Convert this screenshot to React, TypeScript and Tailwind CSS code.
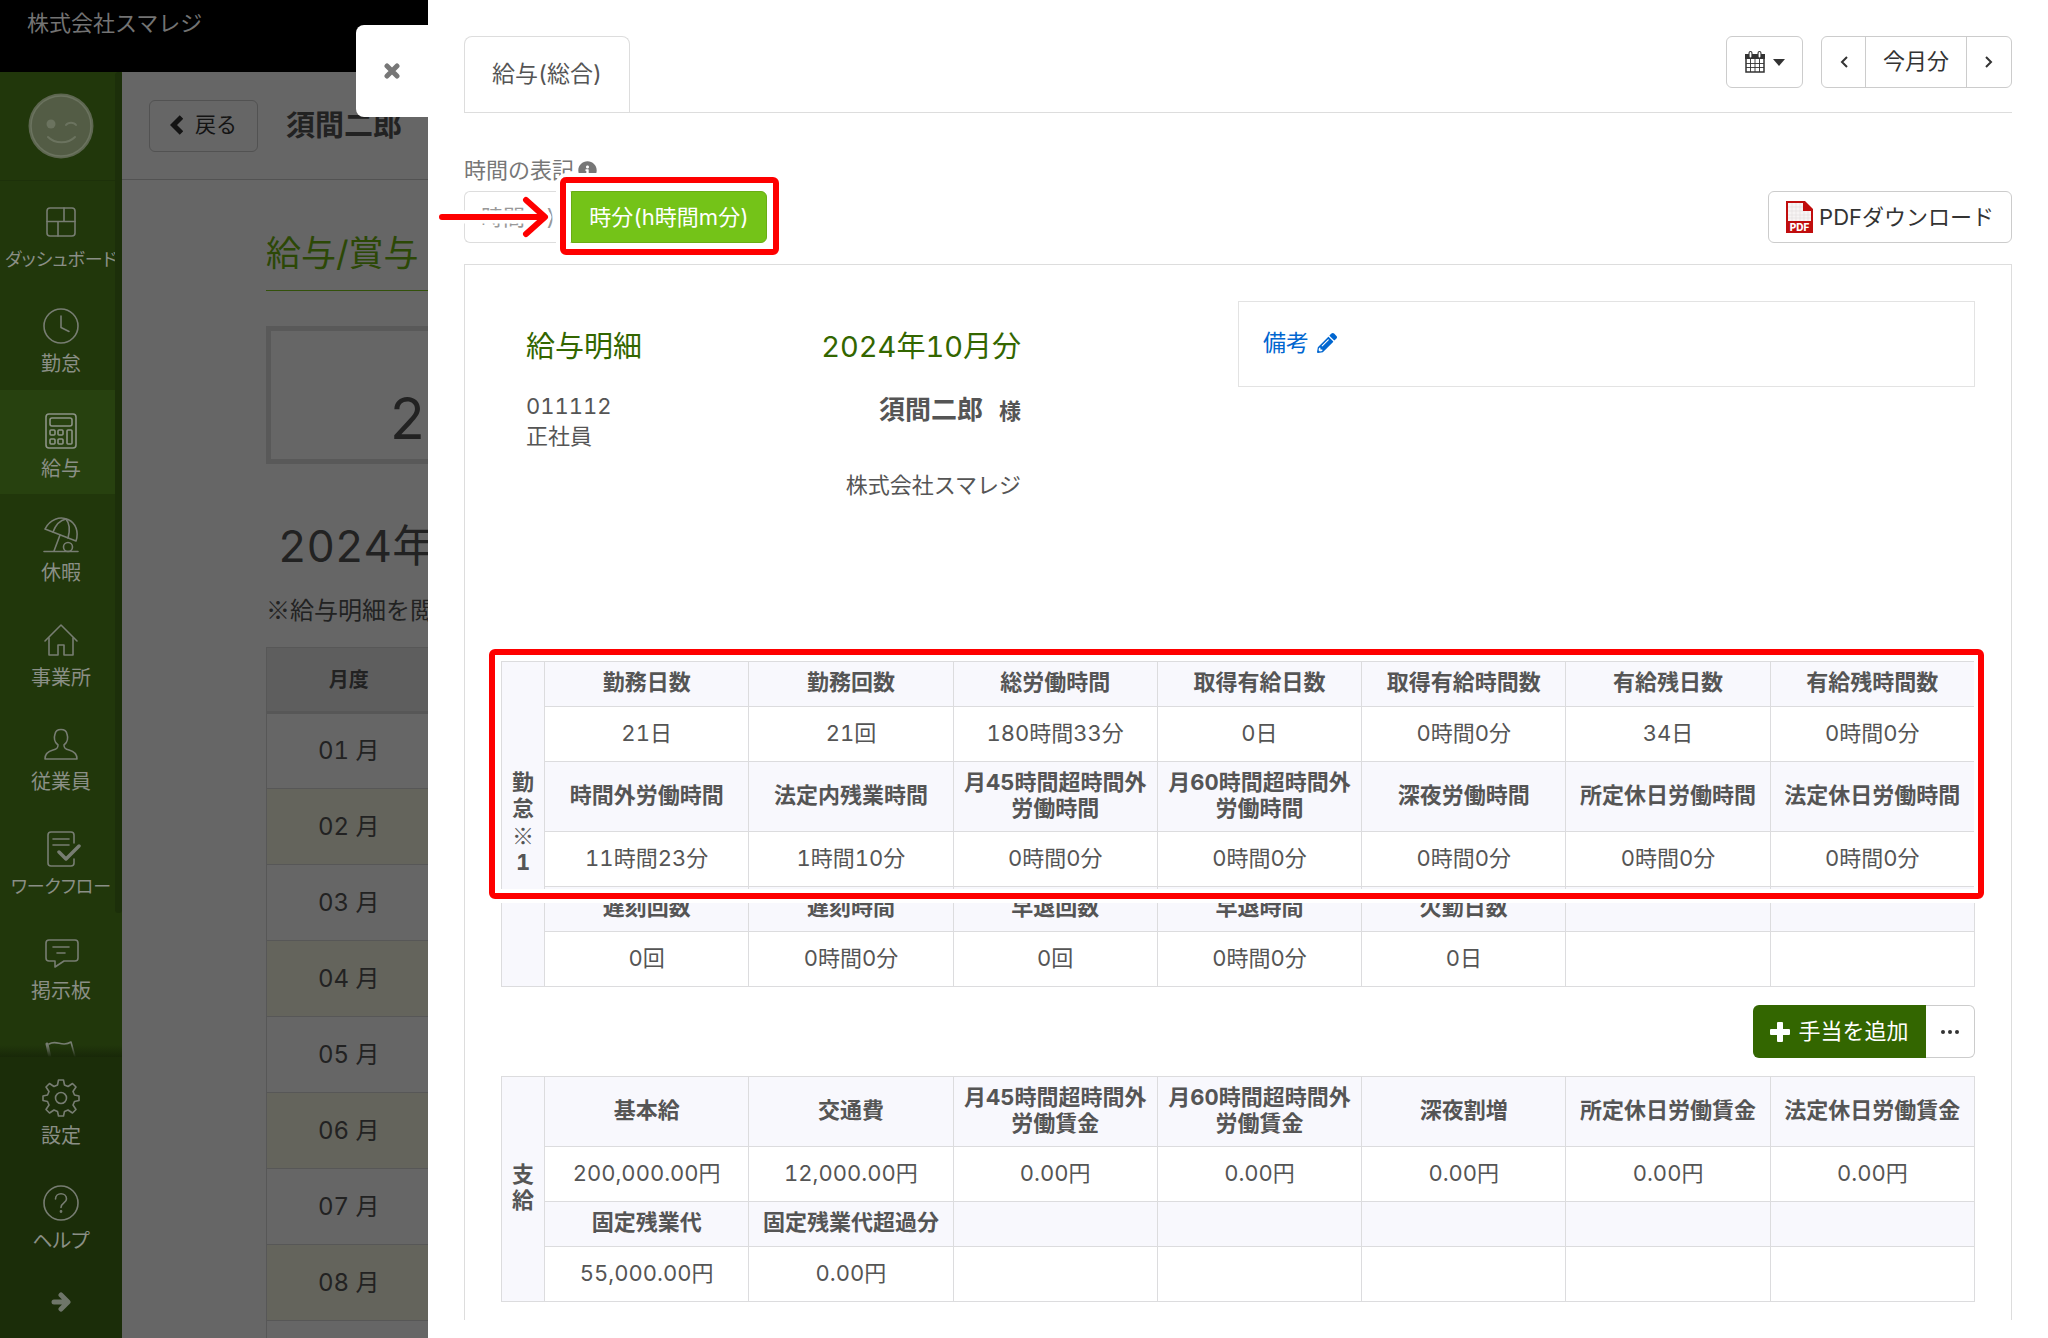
import React from 'react';
import type { ReactNode } from 'react';
import { FaInfoCircle, FaPencilAlt } from 'react-icons/fa';

type NavItem = { label: string; icon: ReactNode; active?: boolean; long?: boolean; iconOnly?: boolean };

type Block = { heads: string[]; values: string[]; tall?: boolean };

function LineIcon({ children }: { children: ReactNode }) {
  return (
    <svg
      viewBox="0 0 40 40"
      className="h-10 w-10"
      fill="none"
      stroke="currentColor"
      strokeWidth="1.600"
      strokeLinejoin="round"
      strokeLinecap="round"
      aria-hidden="true"
    >
      {children}
    </svg>
  );
}

const navItems: NavItem[] = [
  {
    label: 'ダッシュボード',
    long: true,
    icon: (
      <LineIcon>
        <rect x="6" y="6" width="28" height="28" rx="3" />
        <path d="M6 19.500h28M23 6v13.500M17 19.500V34" />
      </LineIcon>
    ),
  },
  {
    label: '勤怠',
    icon: (
      <LineIcon>
        <circle cx="20" cy="20" r="17" />
        <path d="M20 10v11.500l8 4" />
      </LineIcon>
    ),
  },
  {
    label: '給与',
    active: true,
    icon: (
      <LineIcon>
        <rect x="5" y="3" width="30" height="34" rx="3" />
        <rect x="9" y="7" width="22" height="8" rx="2" />
        <rect x="9" y="19" width="5" height="5" rx="1" />
        <rect x="17" y="19" width="5" height="5" rx="1" />
        <rect x="9" y="28" width="5" height="5" rx="1" />
        <rect x="17" y="28" width="5" height="5" rx="1" />
        <rect x="26" y="19" width="5" height="14" rx="1" />
      </LineIcon>
    ),
  },
  {
    label: '休暇',
    icon: (
      <LineIcon>
        <path d="M4 14C9 4 19 1 27 4.500C35 8 38 17 35 26Z" />
        <path d="M12 17C15 9 20 5 25 4C29 9 29 16 27 23" />
        <path d="M19 20L13 36M3 36.500h34" />
        <circle cx="27" cy="32" r="4.500" />
      </LineIcon>
    ),
  },
  {
    label: '事業所',
    icon: (
      <LineIcon>
        <path d="M4 21L20 5L36 21" />
        <path d="M8 18v17h9V25h6v10h9V18" />
      </LineIcon>
    ),
  },
  {
    label: '従業員',
    icon: (
      <LineIcon>
        <path d="M4 35c0-6 4-8 8-9c4-1 5-2 5-5c-4-3-4-8-3-11c1-6 11-6 12 0c1 3 1 8-3 11c0 3 1 4 5 5c4 1 8 3 8 9Z" />
      </LineIcon>
    ),
  },
  {
    label: 'ワークフロー',
    long: true,
    icon: (
      <LineIcon>
        <path d="M33 14V6a3 3 0 0 0-3-3H10a3 3 0 0 0-3 3v28a3 3 0 0 0 3 3h20a3 3 0 0 0 3-3v-4" />
        <path d="M12 10h16M12 16h16" />
        <path d="M18 23l7 7l13-13" strokeWidth="3.500" />
      </LineIcon>
    ),
  },
  {
    label: '掲示板',
    icon: (
      <LineIcon>
        <path d="M8 7h26a3 3 0 0 1 3 3v15a3 3 0 0 1-3 3H23l-9 6v-6H8a3 3 0 0 1-3-3V10a3 3 0 0 1 3-3Z" />
        <path d="M12 14h16M16 20h8" />
      </LineIcon>
    ),
  },
  {
    label: 'お知らせ',
    iconOnly: true,
    icon: (
      <LineIcon>
        <path d="M8 6c8-5 13 4 22-2l7 26" />
        <path d="M6 6l7 32" strokeWidth="3" />
      </LineIcon>
    ),
  },
];

const footerItems: NavItem[] = [
  {
    label: '設定',
    icon: (
      <LineIcon>
        <circle cx="20" cy="20" r="5.500" />
        <path d="M17.500 2h5l1 5l3.500 1.500l4.500-3l3.500 3.500l-3 4.500l1.500 3.500l4.500 1v4.500l-4.500 1l-1.500 3.500l3 4.500l-3.500 3.500l-4.500-3l-3.500 1.500l-1 4.500h-5l-1-4.500l-3.500-1.500l-4.500 3l-3.500-3.500l3-4.500l-1.500-3.500l-4.500-1V18l4.500-1l1.500-3.500l-3-4.500l3.500-3.500l4.500 3l3.500-1.500Z" />
      </LineIcon>
    ),
  },
  {
    label: 'ヘルプ',
    icon: (
      <LineIcon>
        <circle cx="20" cy="20" r="17" />
        <path d="M14.500 16c0-7 11-7 11 0c0 4-5.500 4-5.500 8.500" />
        <circle cx="20" cy="28.500" r="0.600" fill="currentColor" />
      </LineIcon>
    ),
  },
];

const months = ['01 月', '02 月', '03 月', '04 月', '05 月', '06 月', '07 月', '08 月', ''];

const attendance: Block[] = [
  {
    heads: ['勤務日数', '勤務回数', '総労働時間', '取得有給日数', '取得有給時間数', '有給残日数', '有給残時間数'],
    values: ['21日', '21回', '180時間33分', '0日', '0時間0分', '34日', '0時間0分'],
  },
  {
    tall: true,
    heads: ['時間外労働時間', '法定内残業時間', '月45時間超時間外\n労働時間', '月60時間超時間外\n労働時間', '深夜労働時間', '所定休日労働時間', '法定休日労働時間'],
    values: ['11時間23分', '1時間10分', '0時間0分', '0時間0分', '0時間0分', '0時間0分', '0時間0分'],
  },
  {
    heads: ['遅刻回数', '遅刻時間', '早退回数', '早退時間', '欠勤日数', '', ''],
    values: ['0回', '0時間0分', '0回', '0時間0分', '0日', '', ''],
  },
];

const payments: Block[] = [
  {
    tall: true,
    heads: ['基本給', '交通費', '月45時間超時間外\n労働賃金', '月60時間超時間外\n労働賃金', '深夜割増', '所定休日労働賃金', '法定休日労働賃金'],
    values: ['200,000.00円', '12,000.00円', '0.00円', '0.00円', '0.00円', '0.00円', '0.00円'],
  },
  {
    heads: ['固定残業代', '固定残業代超過分', '', '', '', '', ''],
    values: ['55,000.00円', '0.00円', '', '', '', '', ''],
  },
];

// Full-width reference mark, always taken from the Japanese font
function NoteMark() {
  return <span className="font-['Noto_Sans_CJK_JP',sans-serif]">※</span>;
}

function NavButton({ item }: { item: NavItem }) {
  return (
    <a
      href="#"
      aria-label={item.label}
      className={`flex flex-1 flex-col items-center gap-1 pt-[21px] ${item.active ? 'bg-[#27410f] text-[#8c9386]' : 'text-[#777d72]'}`}
    >
      {item.icon}
      {!item.iconOnly && (
        <span className={`leading-7 whitespace-nowrap text-[#8a8f86] [font-feature-settings:'palt'] ${item.long ? 'text-[18px]' : 'text-[20px]'}`}>
          {item.label}
        </span>
      )}
    </a>
  );
}

function Sidebar() {
  return (
    <aside className="flex w-[122px] shrink-0 flex-col bg-[#21370b]">
      <div className="relative flex h-[985px] flex-col overflow-hidden">
        <div className="flex h-[109px] shrink-0 items-center justify-center border-b border-[#1d310a]">
          <svg viewBox="0 0 66 66" className="h-[66px] w-[66px]" fill="none" aria-hidden="true">
            <circle cx="33" cy="33" r="32.500" fill="#5d6650" />
            <circle cx="33" cy="33" r="30" fill="#535c45" stroke="#6b735f" strokeWidth="1.500" />
            <circle cx="23" cy="31" r="4.500" fill="#6b735f" />
            <path d="M38 32c2-3 8-3 10 0M20 44c7 7 20 7 27 0" stroke="#6b735f" strokeWidth="2" strokeLinecap="round" />
          </svg>
        </div>
        <nav className="flex h-[940px] shrink-0 flex-col">
          {navItems.map((item) => (
            <NavButton key={item.label} item={item} />
          ))}
        </nav>
        {/* Scrollbar thumb */}
        <div className="absolute top-0 right-0 h-[841px] w-[7px] rounded-full bg-[#1c2f0a]" />
        <div className="absolute inset-x-0 bottom-0 h-3 bg-gradient-to-b from-transparent to-[#182808]" />
      </div>
      <div className="flex flex-1 flex-col bg-[#1b2d09]">
        <div className="flex h-[209px] flex-col">
          {footerItems.map((item) => (
            <NavButton key={item.label} item={item} />
          ))}
        </div>
        <button type="button" aria-label="メニューを開く" className="flex h-[72px] items-center justify-center text-[#6f766a]">
          <svg viewBox="0 0 20 20" className="h-5 w-5" fill="none" stroke="currentColor" strokeWidth="5" strokeLinecap="round" strokeLinejoin="round" aria-hidden="true">
            <path d="M3 10h13M10 3l7 7l-7 7" />
          </svg>
        </button>
      </div>
    </aside>
  );
}

function EmployeePage() {
  return (
    <main className="min-w-0 flex-1 bg-[#666] text-[#222]">
      <header className="flex h-[108px] items-center gap-7 border-b border-[#525252] pl-[27px]">
        <button type="button" className="flex h-[52px] items-center gap-3 rounded-md border border-[#525252] px-5 pb-0.5 text-[21px] text-[#141414]">
          <svg viewBox="0 0 13 20" className="h-5 w-[13px]" fill="none" stroke="currentColor" strokeWidth="5" aria-hidden="true">
            <path d="M11.500 2L3.500 10l8 8" />
          </svg>
          戻る
        </button>
        <h1 className="text-[29px] font-bold">須間二郎</h1>
      </header>
      <div className="pl-36">
        <h2 className="border-b border-[#33510a] pt-12 pb-3 text-[35px] leading-[50px] text-[#2c4806]">給与/賞与</h2>
        <div className="mt-[35px] h-[138px] border-[5px] border-[#595959] pt-12 pl-[118px] text-[57px] leading-[80px]">2</div>
        <p className="mt-[52px] pl-3 text-[44px] leading-[60px]">2024年</p>
        <p className="mt-[15px] h-9 text-[24px] leading-9">
          <NoteMark />
          給与明細を閲
        </p>
        <table className="mt-5 w-full border-collapse border border-[#575757] text-center">
          <thead>
            <tr className="h-[65px] border-b-[3px] border-[#575757] bg-[#5e5e5e] text-[20px]">
              <th scope="col" className="w-[164px]">月度</th>
              <th scope="col"></th>
            </tr>
          </thead>
          <tbody>
            {months.map((month, i) => (
              <tr key={i} className="h-[76px] border-b border-[#575757] text-[24px] even:bg-[#64645c]">
                <td>{month}</td>
                <td></td>
              </tr>
            ))}
          </tbody>
        </table>
      </div>
    </main>
  );
}

function PdfIcon() {
  return (
    <svg viewBox="0 0 27 32" className="h-8 w-[27px]" aria-hidden="true">
      <path d="M0 0h19l8 8v24H0Z" fill="#c00d0d" />
      <path d="M2 2h15v8h8v10H2Z" fill="#f7f4f4" />
      <path d="M6 2v18M10 2v18M14 2v18M18 10v10M22 10v10M2 6h15M2 10h15M2 14h23M2 17h23" stroke="#e3dede" strokeWidth="0.600" />
      <text x="13.500" y="29.500" textAnchor="middle" fontSize="10" fontWeight="800" fill="#fff" fontFamily="Inter, sans-serif">
        PDF
      </text>
    </svg>
  );
}

// Red frame with a white edge that calls out the area it wraps
function Marker({ className }: { className: string }) {
  return (
    <div
      className={`pointer-events-none absolute rounded-md border-[6px] border-[#fe0000] shadow-[0_0_0_4px_#fff,inset_0_0_0_4px_#fff] ${className}`}
    />
  );
}

function PayTable({ title, blocks }: { title: ReactNode; blocks: Block[] }) {
  return (
    <table className="w-full table-fixed border-collapse text-center text-[22px] leading-[26px] text-[#555] [&_td]:border [&_td]:border-[#dcdcde] [&_th]:border [&_th]:border-[#dcdcde]">
      <colgroup>
        <col className="w-[43px]" />
        <col span={7} />
      </colgroup>
      <tbody>
        {blocks.map((block, i) => (
          <React.Fragment key={i}>
            <tr className={`bg-[#f8f8fd] ${block.tall ? 'h-[70px]' : 'h-[45px]'}`}>
              {i === 0 && (
                <th scope="rowgroup" rowSpan={blocks.length * 2} className="px-2 pb-1 break-all">
                  {title}
                </th>
              )}
              {block.heads.map((head, j) => (
                <th key={j} scope="col" className="pb-1 whitespace-pre">
                  {head}
                </th>
              ))}
            </tr>
            <tr className="h-[55px]">
              {block.values.map((value, j) => (
                <td key={j} className="pb-0.5">{value}</td>
              ))}
            </tr>
          </React.Fragment>
        ))}
      </tbody>
    </table>
  );
}

function Toolbar() {
  return (
    <div className="flex items-end justify-between border-b border-[#ddd] pt-9">
      <div role="tablist" className="flex">
        <button type="button" role="tab" aria-selected="true" className="h-[76px] rounded-t-lg border border-b-0 border-[#ddd] px-[27px] text-[23px] text-[#555]">
          給与(総合)
        </button>
      </div>
      <div className="flex gap-[18px] self-start text-[22px] text-[#333]">
        <button type="button" aria-label="月を選択" className="flex h-[52px] w-[77px] items-center justify-center gap-2 rounded-md border border-[#ccc]">
          <svg viewBox="0 0 20 22" className="h-[22px] w-5" fill="none" aria-hidden="true">
            <path d="M1 4h18v17H1Z" stroke="#333" strokeWidth="1.500" />
            <path d="M0 3h20v5H0Z" fill="#333" />
            <path d="M5.500 8v13M10 8v13M14.500 8v13M1 12.500h18M1 16.500h18" stroke="#333" strokeWidth="0.900" />
            <path d="M5.500 2v3.500M14.500 2v3.500" stroke="#333" strokeWidth="4" strokeLinecap="round" />
            <path d="M5.500 2v3.500M14.500 2v3.500" stroke="#fff" strokeWidth="1.800" strokeLinecap="round" />
          </svg>
          <svg viewBox="0 0 12 7" className="h-[7px] w-3" fill="#333" aria-hidden="true">
            <path d="M0 0h12L6 7Z" />
          </svg>
        </button>
        <div className="flex h-[52px] divide-x divide-[#ccc] rounded-md border border-[#ccc]">
          <button type="button" aria-label="前の月" className="flex w-11 items-center justify-center">
            <svg viewBox="0 0 8 12" className="h-3 w-2" fill="none" stroke="#333" strokeWidth="2" aria-hidden="true">
              <path d="M7 1L2 6l5 5" />
            </svg>
          </button>
          <button type="button" className="w-[101px] pb-0.5">今月分</button>
          <button type="button" aria-label="次の月" className="flex w-11 items-center justify-center">
            <svg viewBox="0 0 8 12" className="h-3 w-2" fill="none" stroke="#333" strokeWidth="2" aria-hidden="true">
              <path d="M1 1l5 5l-5 5" />
            </svg>
          </button>
        </div>
      </div>
    </div>
  );
}

function TimeFormat() {
  return (
    <div className="flex items-end justify-between pt-[42px] text-[22px]">
      <div>
        <div className="flex h-[30px] items-center gap-1 text-[#777]">
          時間の表記
          <FaInfoCircle size={19} />
        </div>
        <div className="relative mt-1.5 flex w-fit">
          <button type="button" className="h-[52px] w-[107px] rounded-l-md border border-r-0 border-[#ddd] text-[#999]">
            時間(h)
          </button>
          <button type="button" className="h-[52px] w-[196px] rounded-r-md border border-[#69ad14] bg-[#74c318] text-white">
            時分(h時間m分)
          </button>
          <Marker className="-top-3.5 -right-3 h-[78px] w-[219px]" />
          <svg viewBox="0 0 120 48" className="absolute top-0.5 -left-8 h-12 w-[120px]" fill="none" strokeLinecap="round" strokeLinejoin="round" aria-hidden="true">
            <path d="M10 24h102M94 7l19 17l-19 17" stroke="#fff" strokeWidth="13" />
            <path d="M10 24h102M94 7l19 17l-19 17" stroke="#fe0000" strokeWidth="6" />
          </svg>
        </div>
      </div>
      <button type="button" className="flex h-[52px] items-center gap-1.5 rounded-md border border-[#ccc] px-[17px] text-[#333]">
        <PdfIcon />
        PDFダウンロード
      </button>
    </div>
  );
}

function Payslip() {
  return (
    <section className="mt-[21px] flex-1 border border-b-0 border-[#ddd] px-9 pt-9 text-[22px] text-[#555]">
      <div className="flex h-[360px] items-start">
        <div className="flex w-1/2 justify-between pl-[25px]">
          <div>
            <h2 className="pt-6 text-[29px] leading-[44px] text-[#336600]">給与明細</h2>
            <p className="mt-[22px] leading-[30px]">011112</p>
            <p className="leading-[30px]">正社員</p>
          </div>
          <div className="mr-[217px] text-right">
            <h2 className="pt-6 text-[29px] leading-[44px] text-[#336600]">2024年10月分</h2>
            <p className="mt-[21px] font-bold">
              <span className="mr-4 text-[26px] leading-10">須間二郎</span>様
            </p>
            <p className="mt-10 leading-[30px]">株式会社スマレジ</p>
          </div>
        </div>
        <div className="h-[86px] w-1/2 border border-[#e3e3e3] px-6 pt-[23px]">
          <a href="#" className="flex items-center gap-2 text-[23px] leading-9 text-[#0066d0]">
            備考
            <FaPencilAlt size={20} />
          </a>
        </div>
      </div>
      <div className="relative">
        <PayTable
          title={
            <>
              勤怠
              <NoteMark />1
            </>
          }
          blocks={attendance}
        />
        <Marker className="-top-3 -right-[9px] -left-3 h-[250px]" />
      </div>
      <div className="my-[18px] flex justify-end">
        <button type="button" className="flex h-[53px] w-[173px] items-center justify-center gap-2 rounded-l-md bg-[#336600] text-white">
          <svg viewBox="0 0 20 20" className="h-5 w-5" fill="currentColor" aria-hidden="true">
            <path d="M8 0h4a1 1 0 0 1 1 1v6h6a1 1 0 0 1 1 1v4a1 1 0 0 1-1 1h-6v6a1 1 0 0 1-1 1H8a1 1 0 0 1-1-1v-6H1a1 1 0 0 1-1-1V8a1 1 0 0 1 1-1h6V1a1 1 0 0 1 1-1Z" />
          </svg>
          手当を追加
        </button>
        <button type="button" aria-label="その他" className="flex h-[53px] w-[49px] items-center justify-center rounded-r-md border border-l-0 border-[#ccc]">
          <svg viewBox="0 0 18 4" className="h-1 w-[18px]" fill="#333" aria-hidden="true">
            <circle cx="2" cy="2" r="2" />
            <circle cx="9" cy="2" r="2" />
            <circle cx="16" cy="2" r="2" />
          </svg>
        </button>
      </div>
      <PayTable title="支給" blocks={payments} />
    </section>
  );
}

export default function App() {
  return (
    <div className="relative flex h-screen flex-col overflow-hidden bg-[#666] font-['Inter','Noto_Sans_CJK_JP',sans-serif] tabular-nums">
      <header className="h-[72px] shrink-0 bg-black pt-[7px] pl-[27px] text-[22px] text-[#737373]">株式会社スマレジ</header>
      <div className="flex min-h-0 flex-1">
        <Sidebar />
        <EmployeePage />
      </div>

      {/* Slide-over panel */}
      <div role="dialog" aria-label="給与明細" className="absolute inset-y-0 right-0 left-[428px] bg-white">
        <button
          type="button"
          aria-label="閉じる"
          className="absolute top-[25px] right-full flex h-[92px] w-[72px] items-center justify-center rounded-l-lg bg-white text-[#777]"
        >
          <svg viewBox="0 0 16 16" className="h-4 w-4" fill="none" stroke="currentColor" strokeWidth="5" strokeLinecap="round" aria-hidden="true">
            <path d="M3 3l10 10M13 3L3 13" />
          </svg>
        </button>
        <div className="flex h-full flex-col px-9 pb-[18px]">
          <Toolbar />
          <TimeFormat />
          <Payslip />
        </div>
      </div>
    </div>
  );
}
